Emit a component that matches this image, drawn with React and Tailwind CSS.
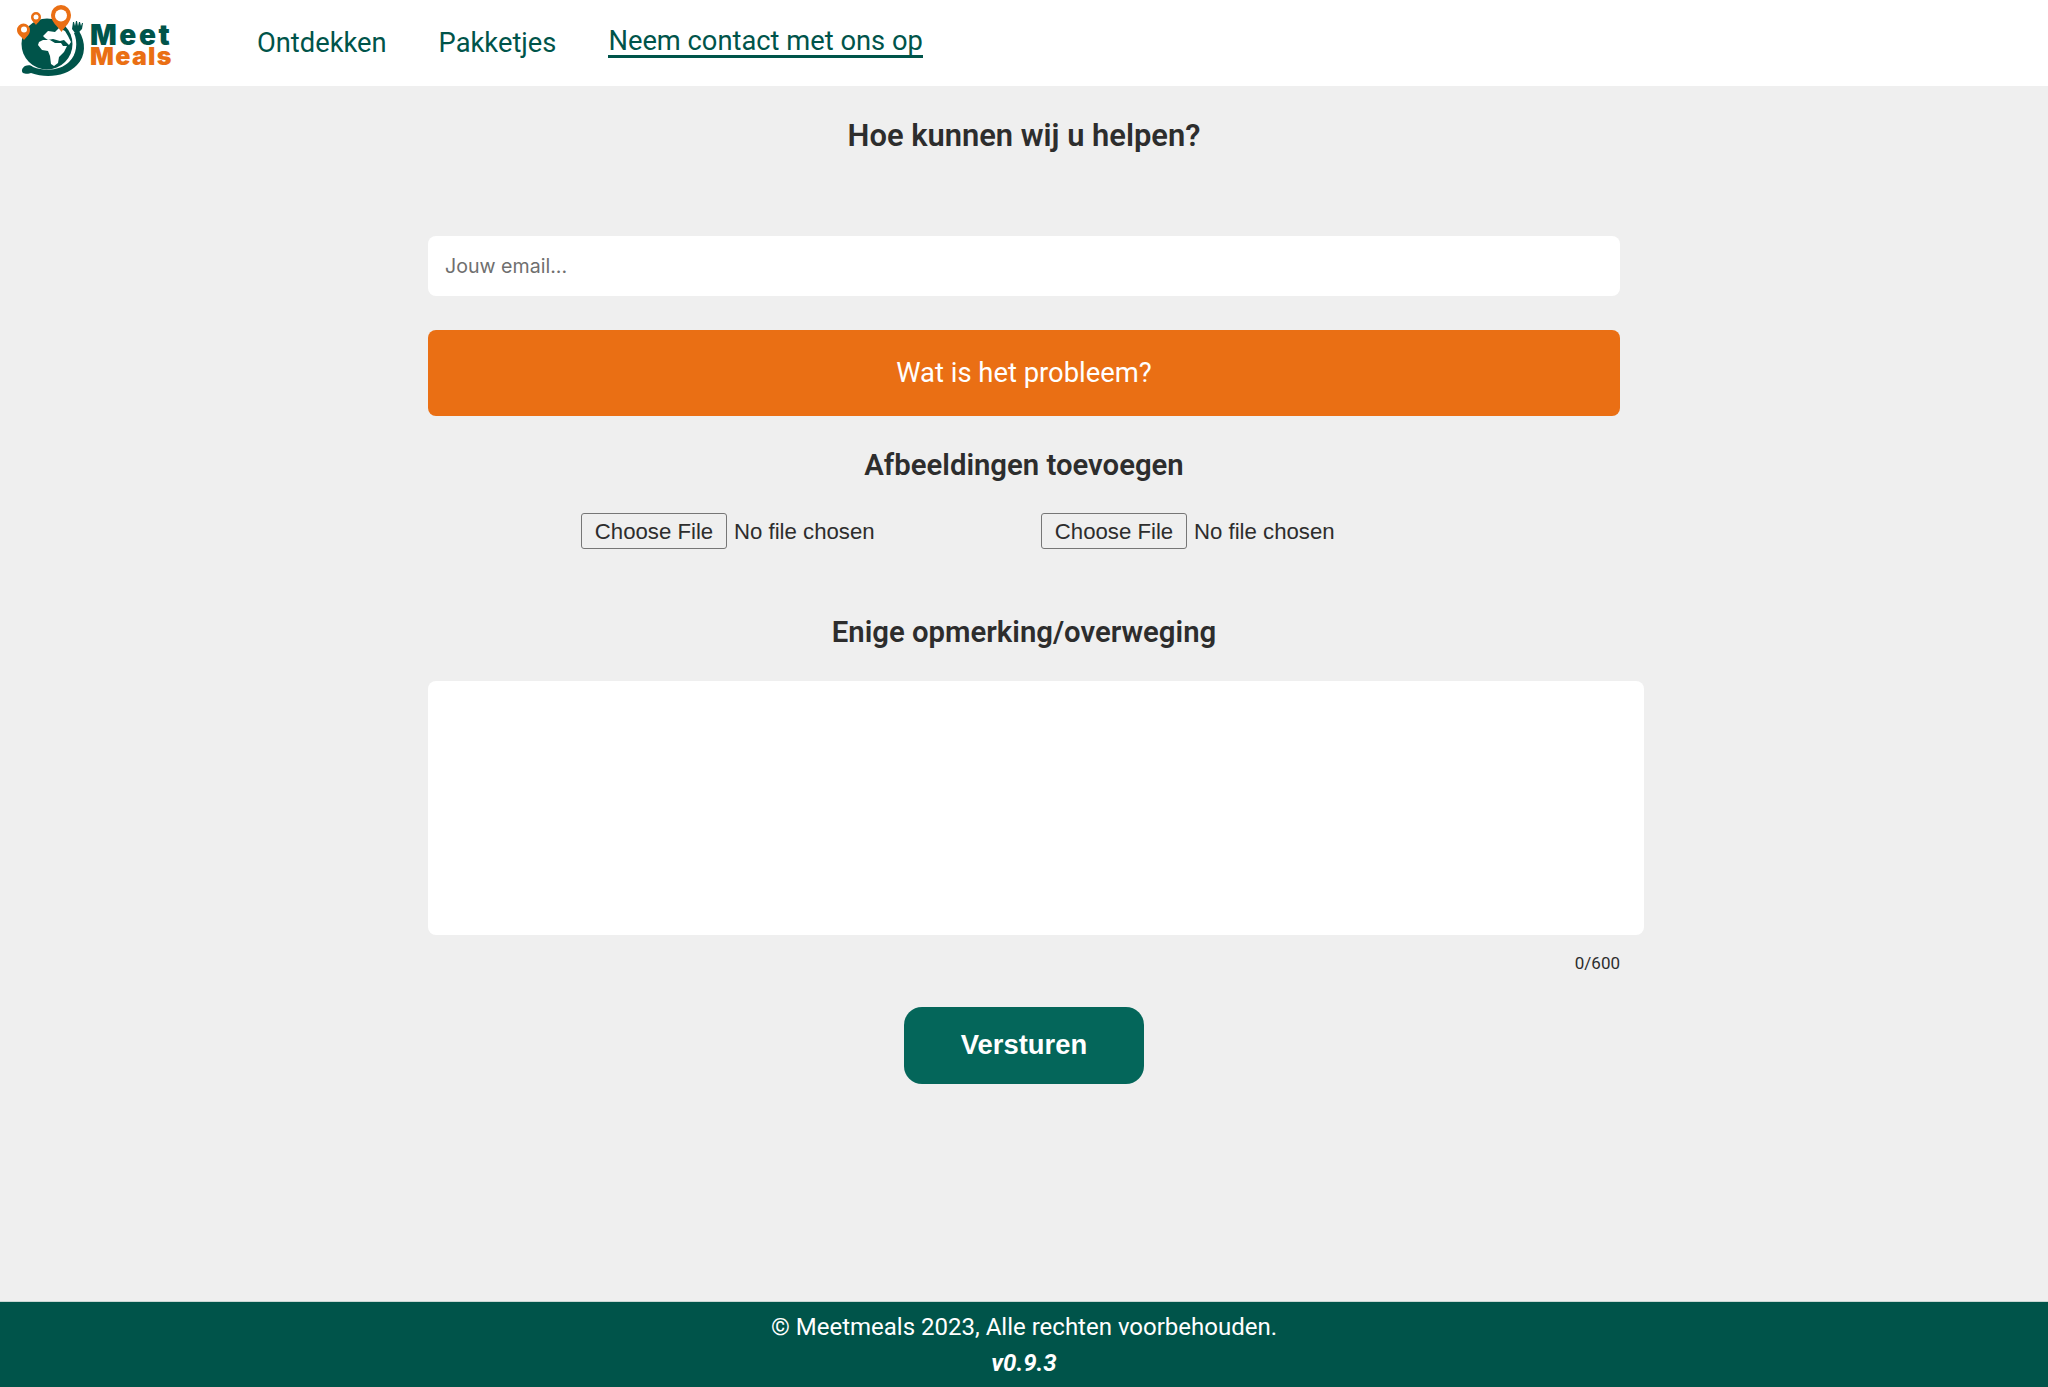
function Logo() {
  return (
    <div className="flex items-center">
      <svg width="90" height="86" viewBox="0 0 90 86" className="shrink-0">
        <circle cx="47" cy="44" r="25.5" fill="#00544a" />
        <path d="M43 36l5-5 7 1 4-4 6 3 3 5 3 6-2 3-5-5-4 1-7-2-5 1-3-2z" fill="#fff" />
        <path d="M43 40l7 0 5 3 6 0 2 3 4 0-3 6-5 5-1 6-4 3-3-2-1-8-2-5-6-1-4-5 1-3z" fill="#fff" />
        <path d="M79 31c7 11 7 25-2 34-10 11-30 14-46 8-2 1-6 1-8 0-2-2-1-5 2-7 3-1 6-1 8 1 13 5 28 3 36-5 8-7 9-20 5-29z" fill="#00544a" />
        <path d="M75 33l-3-4 1-7 1 0 1 4 1-5 1 0 1 5 1-4 1 0 1 4 1-3 1 0-1 6-3 3z" fill="#00544a" />
        <path d="M61.500 32c-4-6-10.500-10-10.500-17a10 10 0 0 1 20 0c0 7-5.500 11-9.500 17z" fill="#ea6f14" />
        <circle cx="61" cy="15.500" r="6" fill="#fff" />
        <path d="M24 40c-2-3-7-5-7-10a6.500 6.500 0 0 1 13 0c0 5-4 7-6 10z" fill="#ea6f14" />
        <circle cx="24" cy="29.500" r="3" fill="#fff" />
        <path d="M36 25c-1-2-5-4-5-8a5 5 0 0 1 10 0c0 4-4 6-5 8z" fill="#ea6f14" />
        <circle cx="36" cy="17" r="2.500" fill="#fff" />
      </svg>
      <div className="mt-[3px] flex w-[84px] flex-col font-['Inter',sans-serif] font-black">
        <span className="text-[28px] leading-[23px] tracking-[2.6px] text-[#00544a]">Meet</span>
        <span className="text-[25px] leading-[19px] tracking-[1.3px] text-[#ea6f14]">Meals</span>
      </div>
    </div>
  );
}

function FileField() {
  return (
    <input
      type="file"
      className="w-[426px] font-['Liberation_Sans',sans-serif] text-[22.2px] leading-[36px] text-[#2d2d2d] file:mr-[7px] file:h-[36px] file:w-[146px] file:cursor-default file:rounded-[3px] file:border file:border-solid file:border-[#767676] file:bg-[#efefef] file:text-center"
    />
  );
}

export default function App() {
  return (
    <div className="flex min-h-screen flex-col bg-[#efefef] font-['Roboto',sans-serif] text-[#2d2d2d]">
      <header className="flex h-[86px] items-center bg-white">
        <Logo />
        <nav className="ml-[83px] flex items-center gap-[52px] text-[27.3px] text-[#00544a]">
          <a href="#">Ontdekken</a>
          <a href="#">Pakketjes</a>
          <a href="#" className="border-b-[3px] border-[#00544a] leading-[27px]">Neem contact met ons op</a>
        </nav>
      </header>

      <main className="flex-1">
        <form className="mx-auto w-[1192px]">
          <h1 className="mt-[31px] text-center text-[30.9px] leading-[38px] font-semibold">Hoe kunnen wij u helpen?</h1>
          <input
            type="email"
            placeholder="Jouw email..."
            className="mt-[81px] block h-[60px] w-full rounded-lg bg-white px-[17px] font-['Inter',sans-serif] text-[19.6px] placeholder:text-[#6f6f6f] outline-none"
          />
          <button type="button" className="mt-[34px] block h-[86px] w-full rounded-lg bg-[#ea6f14] pt-[1px] text-[27.4px] text-white">
            Wat is het probleem?
          </button>
          <h2 className="mt-[30px] text-center text-[29.3px] leading-[38px] font-semibold">Afbeeldingen toevoegen</h2>
          <div className="mt-[29px] flex justify-center gap-[34px]">
            <FileField />
            <FileField />
          </div>
          <h2 className="mt-[63px] text-center text-[29.3px] leading-[38px] font-semibold">Enige opmerking/overweging</h2>
          <textarea className="mt-[30px] block h-[254px] w-[1216px] max-w-none resize-none rounded-lg bg-white outline-none" />
          <p className="mt-[18px] text-right text-[17px] leading-[20px]">0/600</p>
          <div className="mt-[34px] flex justify-center">
            <button type="submit" className="h-[77px] w-[240px] rounded-[18px] bg-[#04665a] pb-[2px] font-['Liberation_Sans',sans-serif] text-[27.4px] font-bold text-white">
              Versturen
            </button>
          </div>
        </form>
      </main>

      <footer className="flex h-[86px] flex-col items-center border-t border-[#c9d6d3] bg-[#00544a] pt-[10px] text-white">
        <p className="text-[24px] leading-[30px]">© Meetmeals 2023, Alle rechten voorbehouden.</p>
        <p className="mt-[6px] text-[24px] leading-[30px] font-bold italic">v0.9.3</p>
      </footer>
    </div>
  );
}
